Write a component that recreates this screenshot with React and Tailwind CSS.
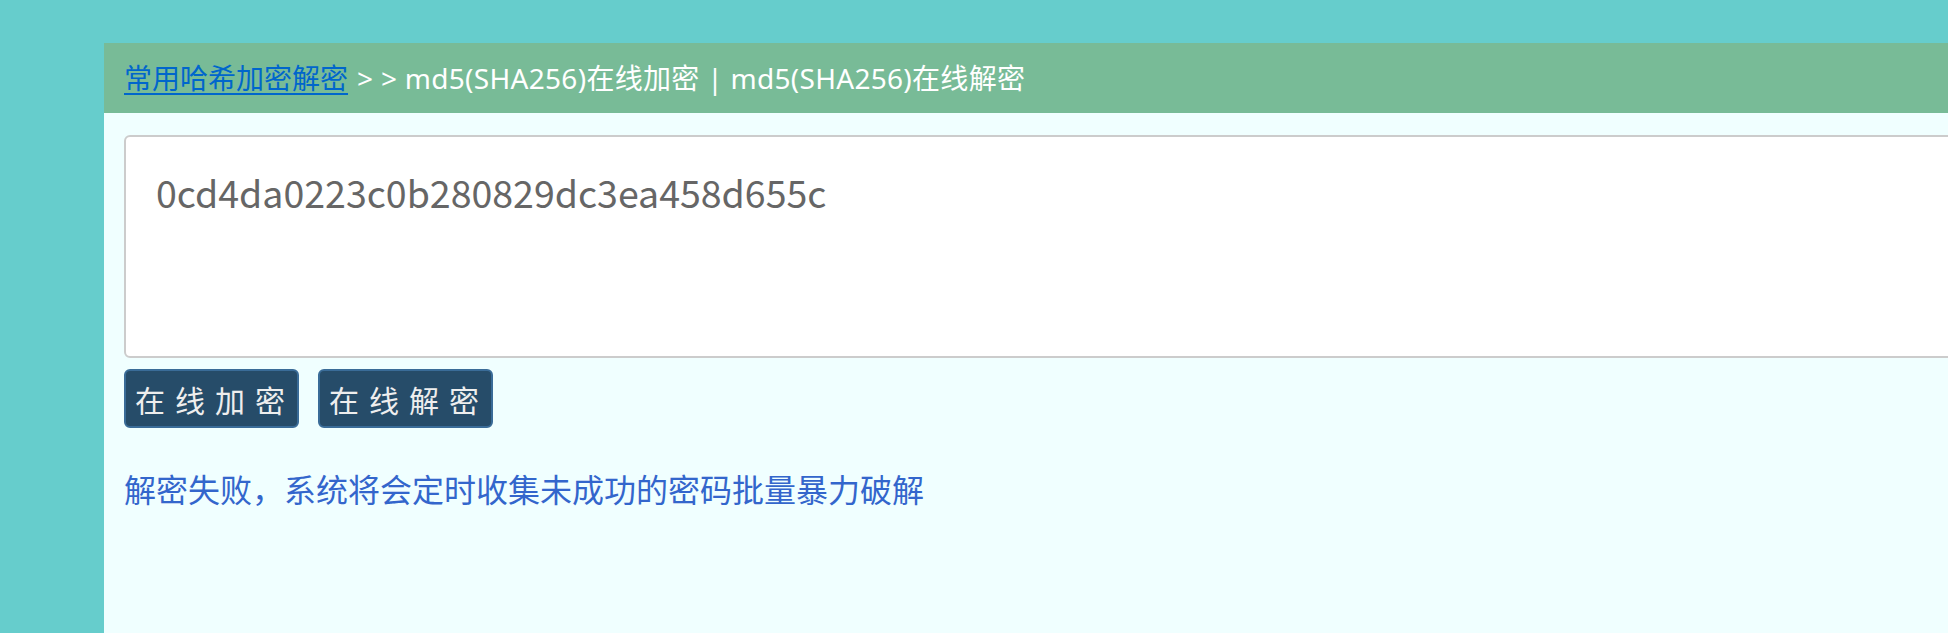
import { useState } from "react";

// md5(SHA256) online encrypt / decrypt page
export default function App() {
  const [value, setValue] = useState("0cd4da0223c0b280829dc3ea458d655c");

  return (
    <div
      className="h-[633px] w-full overflow-hidden bg-[#66cdcc] pt-[43px] pl-[104px]"
      style={{ fontFamily: '"Noto Sans CJK SC", "Noto Sans", sans-serif' }}
    >
      <div className="w-[2000px] h-[600px] bg-[#f0ffff]">
        <div className="h-[70px] bg-[#78bb97] pl-[20px] flex items-center text-[28px] text-white leading-none font-['Noto_Sans','Noto_Sans_CJK_SC',sans-serif]">
          <a href="#" className="text-[#0066cc] underline underline-offset-[4px]">
            常用哈希加密解密
          </a>
          <span className="ml-[9px] tracking-[0.3px]">&gt; &gt; md5(SHA256)在线加密 | md5(SHA256)在线解密</span>
        </div>

        <div className="pl-[20px] pt-[22px]">
          <textarea
            value={value}
            onChange={(e) => setValue(e.target.value)}
            className="block w-[1900px] h-[223px] resize-none rounded-[6px] border-2 border-[#cccccc] bg-white px-[30px] pt-[31px] text-[37.5px] leading-[1.3] text-[#666666] outline-none"
          />

          <div className="mt-[11px] flex gap-[19px]">
            <button className="w-[175px] h-[59px] flex items-center whitespace-nowrap rounded-[6px] border-2 border-[#3a6c98] bg-[#264c69] text-[30px] tracking-[10px] pl-[9px] text-[#eeeeee] leading-none">
              在线加密
            </button>
            <button className="w-[175px] h-[59px] flex items-center whitespace-nowrap rounded-[6px] border-2 border-[#3a6c98] bg-[#264c69] text-[30px] tracking-[10px] pl-[9px] text-[#eeeeee] leading-none">
              在线解密
            </button>
          </div>

          <p className="mt-[44px] text-[32px] text-[#3366cc] leading-none">
            解密失败，系统将会定时收集未成功的密码批量暴力破解
          </p>
        </div>
      </div>
    </div>
  );
}
